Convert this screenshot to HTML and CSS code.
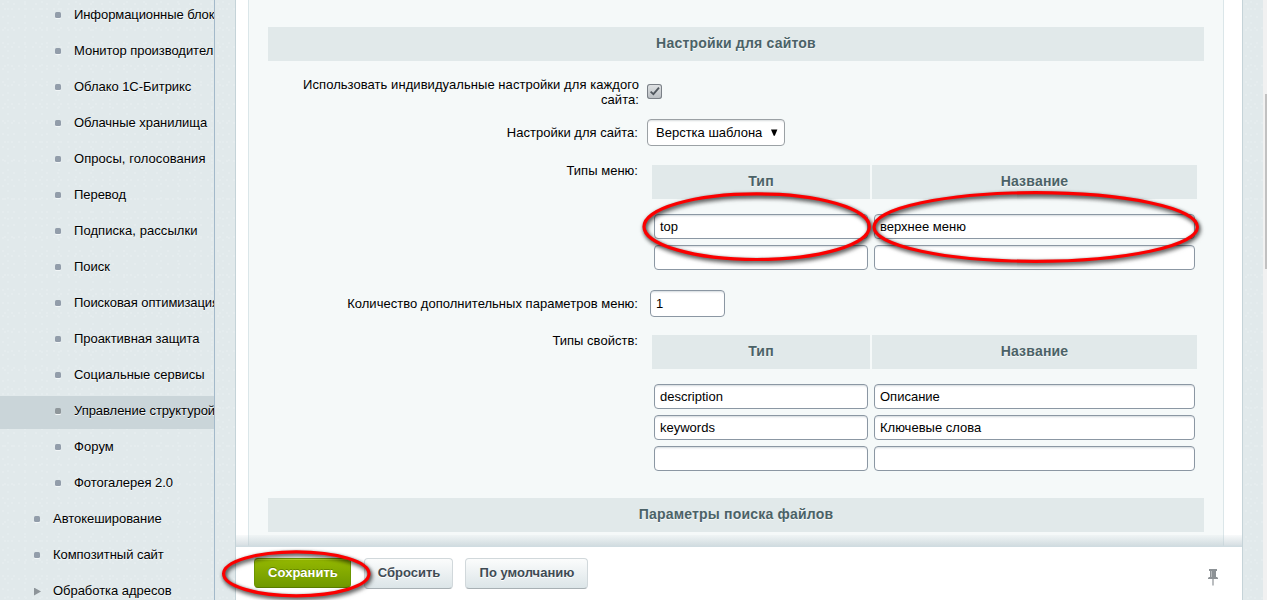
FILE: index.html
```html
<!DOCTYPE html>
<html lang="ru">
<head>
<meta charset="utf-8">
<title>Настройки</title>
<link rel="stylesheet" href="styles.css">
</head>
<body>
<div class="app">
  <nav class="sidebar">
    <a class="item sub"><i class="dot"></i><span class="tight">Информационные блок</span></a>
    <a class="item sub"><i class="dot"></i><span>Монитор производител</span></a>
    <a class="item sub"><i class="dot"></i><span>Облако 1С-Битрикс</span></a>
    <a class="item sub"><i class="dot"></i><span>Облачные хранилища</span></a>
    <a class="item sub"><i class="dot"></i><span class="wide">Опросы, голосования</span></a>
    <a class="item sub"><i class="dot"></i><span>Перевод</span></a>
    <a class="item sub"><i class="dot"></i><span class="wide">Подписка, рассылки</span></a>
    <a class="item sub"><i class="dot"></i><span>Поиск</span></a>
    <a class="item sub"><i class="dot"></i><span class="tight">Поисковая оптимизация</span></a>
    <a class="item sub"><i class="dot"></i><span>Проактивная защита</span></a>
    <a class="item sub"><i class="dot"></i><span>Социальные сервисы</span></a>
    <a class="item sub active"><i class="dot"></i><span>Управление структурой</span></a>
    <a class="item sub"><i class="dot"></i><span class="wide">Форум</span></a>
    <a class="item sub"><i class="dot"></i><span>Фотогалерея 2.0</span></a>
    <a class="item"><i class="dot"></i><span>Автокеширование</span></a>
    <a class="item"><i class="dot"></i><span>Композитный сайт</span></a>
    <a class="item"><i class="arrow"></i><span>Обработка адресов</span></a>
  </nav>
  <div class="gutter-left"></div>
  <main class="content">
    <div class="panel">
      <h2 class="heading">Настройки для сайтов</h2>
      <div class="row row-check">
        <label class="label">Использовать индивидуальные настройки для каждого<br>сайта:</label>
        <span class="checkbox"><svg width="15" height="15" viewBox="0 0 15 15"><path d="M3.6 7.6 6.4 10.2 12 3.6" fill="none" stroke="#50575e" stroke-width="1.8"/></svg></span>
      </div>
      <div class="row row-site">
        <label class="label">Настройки для сайта:</label>
        <div class="select"><span>Верстка шаблона</span><svg width="7" height="8" viewBox="0 0 7 8"><path d="M0 .6h6.4L3.8 6.8H2.7z" fill="#000"/></svg></div>
      </div>
      <div class="row row-menu">
        <label class="label">Типы меню:</label>
        <div class="table">
          <div class="th">Тип</div><div class="th">Название</div>
          <div class="input first">top</div><div class="input first">верхнее меню</div>
          <div class="input"></div><div class="input"></div>
        </div>
      </div>
      <div class="row row-count">
        <label class="label">Количество дополнительных параметров меню:</label>
        <div class="input small">1</div>
      </div>
      <div class="row row-props">
        <label class="label">Типы свойств:</label>
        <div class="table">
          <div class="th">Тип</div><div class="th">Название</div>
          <div class="input first">description</div><div class="input first">Описание</div>
          <div class="input">keywords</div><div class="input">Ключевые слова</div>
          <div class="input"></div><div class="input"></div>
        </div>
      </div>
      <h2 class="heading">Параметры поиска файлов</h2>
    </div>
    <footer class="footer">
      <button class="btn save">Сохранить</button>
      <button class="btn reset">Сбросить</button>
      <button class="btn default">По умолчанию</button>
      <svg class="pin" width="10" height="17" viewBox="0 0 10 17"><path d="M1 0h8v2H8v6h1l1 1v1H0V9l1-1h1V2H1z" fill="#8d9296"/><path d="M3.5 2v6" stroke="#b7babd"/><path d="M5 10v6.5" stroke="#8d9296" stroke-width="1.2"/></svg>
    </footer>
  </main>
  <div class="gutter-right"></div>
  <div class="scroll"><div class="thumb"></div></div>
</div>
<svg class="marks" width="1267" height="600" viewBox="0 0 1267 600">
  <g fill="none" stroke="#fb0000" stroke-width="3.2">
    <ellipse cx="756.7" cy="226.7" rx="112.7" ry="32.8"/>
    <ellipse cx="1035.7" cy="227" rx="161.7" ry="34.3"/>
    <ellipse cx="296.3" cy="573.8" rx="72.7" ry="22"/>
  </g>
</svg>
</body>
</html>
```
FILE: styles.css
```css
* { box-sizing: border-box; }
body {
  margin: 0;
  width: 1267px;
  height: 600px;
  overflow: hidden;
  position: relative;
  font: 13px/15px "Liberation Sans", Arial, sans-serif;
  color: #000;
}
.app { display: flex; height: 600px; overflow: hidden; }
.sidebar, .gutter-left, .gutter-right {
  background-color: #e1e9eb;
  background-image:
    radial-gradient(circle at 3px 4px, #e5ecee .8px, transparent 1.3px),
    radial-gradient(circle at 8px 2px, #e4ecee .8px, transparent 1.3px),
    radial-gradient(circle at 5px 9px, #e5ecee .8px, transparent 1.3px);
  background-size: 11px 13px, 17px 7px, 7px 19px;
}
.sidebar { width: 215px; border-right: 1px solid #a3b9ca; overflow: hidden; }
.item {
  display: flex;
  align-items: center;
  height: 33px;
  margin-bottom: 3px;
  padding: 0 0 4px 34px;
  white-space: nowrap;
  text-shadow: 0 1px 0 #f4f8f9;
}
.item.sub { padding-left: 55px; }
.item span { letter-spacing: -.04px; }
.item .tight { letter-spacing: -.08px; }
.item .wide { letter-spacing: .06px; }
.item.active { background: #cad5d9; }
.item.active .dot { background: #8f979b; }
.dot { flex: none; width: 6px; height: 6px; border-radius: 1.5px; background: #929daa; margin: 1px 13px 0 0; box-shadow: 0 1px 0 #f2f6f7; }
.arrow { flex: none; width: 7px; height: 8px; background: #8d9499; clip-path: polygon(0 0, 100% 50%, 0 100%); margin: 2px 12px 0 0; }
.gutter-left { width: 21px; border-right: 1px solid #c5d3d8; }
.gutter-right { width: 21px; border-left: 1px solid #c5d3d8; }
.content { width: 1006px; display: flex; flex-direction: column; background: #fff; }
.panel {
  height: 547px;
  margin: 0 18px 0 12px;
  padding: 27px 19px 0;
  background: #f5f9f9;
  border: solid #dbe6e9;
  border-width: 0 1px;
  overflow: hidden;
}
.heading, .th {
  margin: 0;
  height: 34px;
  background: #e1e9ea;
  font: bold 14px/33px "Liberation Sans", Arial, sans-serif;
  color: #4b6267;
  text-align: center;
  text-shadow: 0 1px 0 #f6f9f9;
  letter-spacing: .2px;
}
.row { display: flex; align-items: flex-start; }
.label { width: 370px; text-align: right; flex: none; white-space: nowrap; letter-spacing: .02px; }
.row-check { height: 58px; padding-top: 16px; }
.row-check .label { width: 371px; letter-spacing: .06px; }
.checkbox {
  width: 15px; height: 15px; margin: 7px 0 0 8px;
  border-radius: 3px;
  background: linear-gradient(#e1e4e6, #b8bdc1);
  box-shadow: inset 0 0 0 1px #7a8087;
}
.checkbox svg { display: block; }
.row-site { height: 46px; }
.row-site .label { padding-top: 6px; }
.select {
  display: flex; align-items: center; justify-content: space-between;
  width: 138px; height: 27px; margin-left: 9px; padding: 0 6px 0 8px;
  border: 1px solid #9ba1a5; border-radius: 4px; background: #fff;
  box-shadow: inset 0 2px 2px -1px #d8dcde;
}
.row-menu { height: 125px; }
.row-menu .label, .row-props .label { margin-top: -2px; }
.table { display: grid; grid-template-columns: 218px 325px; column-gap: 2px; row-gap: 6px; margin-left: 14px; }
.input {
  height: 25px;
  margin: 0 2px;
  padding: 0 5px;
  line-height: 24px;
  background: #fff;
  border: 1px solid #8b97a3;
  border-radius: 4px;
  box-shadow: inset 0 2px 2px -1px #d3d9de;
  overflow: hidden;
}
.input.first { margin-top: 9px; }
.row-count { height: 45px; }
.row-count .label { padding-top: 6px; }
.input.small { width: 75px; height: 27px; margin: 0 0 0 12px; line-height: 26px; }
.row-props { height: 163px; }
.footer {
  height: 53px; flex: none; display: flex; align-items: flex-start;
  padding: 11px 24px 0 18px; background: #fff; position: relative;
}
/* soft shade cast on the form by the pinned button bar */
.footer::before {
  content: ""; position: absolute; left: 0; right: 0; top: -12px; height: 12px;
  background: linear-gradient(rgba(190,205,212,.1), rgba(190,204,210,.6) 10px, #d0dce1 11px);
}
.btn {
  height: 31px; padding: 0 0 2px 1px; border: 1px solid #d1d8db; border-bottom-color: #a8b0b4; border-radius: 4px;
  font: bold 13px/28px "Liberation Sans", Arial, sans-serif; color: #3f4b54;
  background: linear-gradient(#fbfcfc, #dce5e8); text-shadow: 0 1px 0 #fff; letter-spacing: .02px;
}
.save { width: 97px; height: 30px; border-color: #729e00 #6b9500 #587c00; background: linear-gradient(#94b800, #709900); color: #fff; text-shadow: 0 -1px 0 #658600; box-shadow: inset 0 1px 0 #b5d52c; }
.reset { width: 89px; margin-left: 13px; }
.default { width: 123px; margin-left: 12px; }
.pin { margin: 11px 0 0 auto; }
.scroll { width: 4px; background: #f1f1f1; padding: 94px 0 0 2px; }
.thumb { width: 2px; height: 175px; background: #c1c1c1; }
.marks { position: absolute; left: 0; top: 0; pointer-events: none; filter: drop-shadow(1px 2px 2px rgba(0,0,0,.7)) drop-shadow(1px 1px 1px rgba(0,0,0,.3)); }
```
